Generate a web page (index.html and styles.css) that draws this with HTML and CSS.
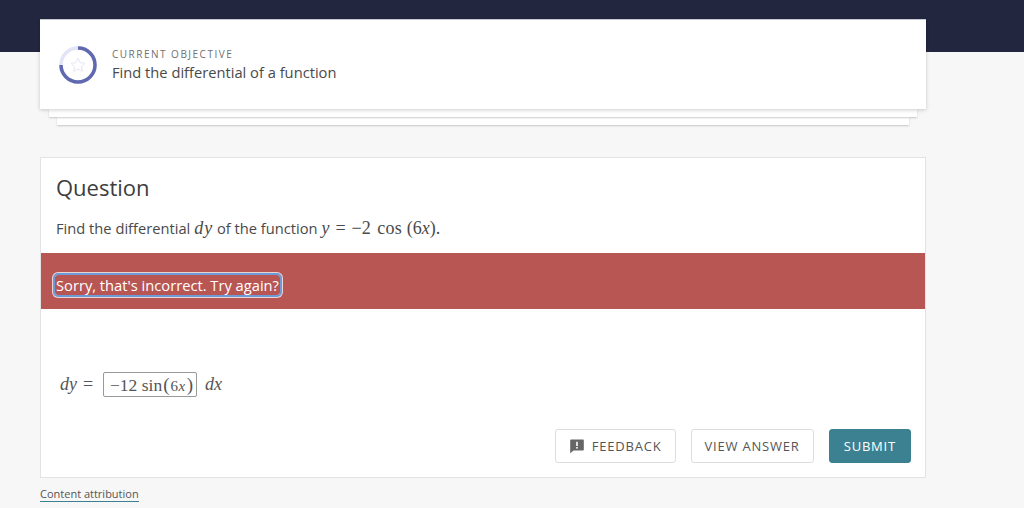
FILE: index.html
```html
<!DOCTYPE html>
<html lang="en">
<head>
    <meta charset="UTF-8">
    <meta name="viewport" content="width=device-width, initial-scale=1.0">
    <title>Find the differential of a function</title>
    <link rel="stylesheet" href="styles.css">
</head>
<body>
    <main class="page">
        <section class="objective">
            <svg class="ring" width="38" height="38" viewBox="0 0 38 38">
                <circle cx="19" cy="19" r="17" fill="none" stroke="#e3e4f5" stroke-width="3.5"/>
                <path d="M19 2A17 17 0 1 1 2 19" fill="none" stroke="#6068b0" stroke-width="3.5"/>
                <path d="M19 12.2l2.1 4.5 4.9.6-3.6 3.300 1 4.800-4.400-2.400-4.400 2.400 1-4.800-3.600-3.300 4.900-.6z" fill="none" stroke="#e6e7f6" stroke-width="1" stroke-linejoin="round"/>
            </svg>
            <div class="objective-text">
                <div class="label">CURRENT OBJECTIVE</div>
                <div class="objective-name">Find the differential of a function</div>
            </div>
        </section>
        <div class="layer layer-one"></div>
        <div class="layer layer-two"></div>

        <section class="question">
            <h2>Question</h2>
            <p class="prompt">Find the differential <span class="math dy-inline"><i>dy</i></span> of the function <span class="math"><i>y</i><span class="rel">=</span>&minus;2 <span class="cos">cos</span> (6<i>x</i>).</span></p>
            <div class="alert"><span class="alert-text">Sorry, that's incorrect. Try again?</span></div>
            <div class="answer math">
                <span class="dy"><i>dy</i><span class="rel">=</span></span>
                <span class="answer-box">&minus;12 sin<span class="paren">(</span><span class="small">6<i>x</i></span><span class="paren">)</span></span>
                <span class="dx"><i>dx</i></span>
            </div>
            <div class="actions">
                <button class="btn">
                    <svg width="16" height="16" viewBox="0 0 16 16"><path d="M2 1.500h12a.8.8 0 0 1 .8.8v9.400a.8.8 0 0 1-.8.8H4.600L1.200 15.200V2.300a.8.8 0 0 1 .8-.8z" fill="#666"/><rect x="7.200" y="3.800" width="1.600" height="4.200" fill="#fff"/><rect x="7.200" y="9" width="1.600" height="1.600" fill="#fff"/></svg>
                    FEEDBACK
                </button>
                <button class="btn">VIEW ANSWER</button>
                <button class="btn btn-submit">SUBMIT</button>
            </div>
        </section>
        <a class="attribution">Content attribution</a>
    </main>
</body>
</html>
```

FILE: styles.css
```css
body{
    margin: 0;
    height: 508px;
    overflow: hidden;
    background: linear-gradient(#22263f 52px, #f7f7f7 52px);
    font-family: "Open Sans", sans-serif;
    color: #444;
}
.page{
    width: 886px;
    margin-left: 40px;
    padding-top: 19px;
}
.objective{
    height: 90px;
    box-sizing: border-box;
    padding: 0 19px;
    display: flex;
    align-items: center;
    gap: 15px;
    background-color: white;
    border-top: 1px solid #c9cad1;
    box-shadow: 0 1px 4px rgba(0, 0, 0, 0.2);
    position: relative;
    z-index: 3;
}
.ring{
    flex: none;
}
.label{
    font-size: 10px;
    line-height: 14px;
    letter-spacing: 1.5px;
    color: #707070;
}
.objective-name{
    font-size: 14.7px;
    line-height: 22px;
    color: #4a4a4a;
}
.layer{
    height: 8px;
    background-color: white;
    box-shadow: 0 1px 2px rgba(0, 0, 0, 0.2);
    position: relative;
}
.layer-one{
    margin: 0 9px;
    z-index: 2;
}
.layer-two{
    margin: 0 17px;
    z-index: 1;
}
.question{
    margin-top: 32px;
    height: 321px;
    box-sizing: border-box;
    background-color: white;
    border: 1px solid #e3e3e3;
}
h2{
    margin: 0;
    padding: 14px 15px 0;
    font-size: 22px;
    line-height: 30px;
    font-weight: 400;
    color: #3d3d3d;
}
.prompt{
    margin: 14px 0 0;
    padding: 0 15px;
    font-size: 14.7px;
    line-height: 24px;
    height: 37px;
    color: #4a4a4a;
}
.math{
    font-family: "Liberation Serif", serif;
    font-size: 18px;
}
.dy-inline{
    letter-spacing: 1px;
}
.rel{
    margin: 0 6px;
}
.cos{
    margin-left: 2px;
    letter-spacing: 0.3px;
}
.alert{
    height: 56px;
    box-sizing: border-box;
    padding: 8px 14px 0;
    display: flex;
    align-items: center;
    background-color: #b85654;
}
.alert-text{
    font-size: 14.7px;
    line-height: 20px;
    font-weight: 500;
    color: white;
    padding: 0 1px;
    border-radius: 3px;
    outline: 2px solid #6d9bd8;
    box-shadow: 0 0 0 3px rgba(255, 255, 255, 0.75);
}
.answer{
    margin-top: 63px;
    padding-left: 19px;
    height: 24px;
    display: flex;
    align-items: center;
    color: #555;
}
.dy{
    width: 43px;
    flex: none;
    white-space: nowrap;
}
.answer-box{
    height: 25px;
    box-sizing: border-box;
    width: 94px;
    padding-left: 6px;
    line-height: 23px;
    font-size: 17.5px;
    border: 1px solid #999;
    border-radius: 2px;
    white-space: nowrap;
}
.paren{
    font-size: 19px;
    margin: 0 1px;
}
.small{
    font-size: 15px;
    letter-spacing: 0.5px;
}
.dx{
    margin-left: 8px;
}
.actions{
    margin-top: 33px;
    padding-right: 14px;
    display: flex;
    justify-content: flex-end;
    gap: 15px;
}
.btn{
    height: 34px;
    padding: 0 13px;
    display: flex;
    align-items: center;
    gap: 7px;
    background-color: white;
    border: 1px solid #ddd;
    border-radius: 3px;
    font-family: "Open Sans", sans-serif;
    font-size: 13px;
    font-weight: 500;
    letter-spacing: 0.8px;
    color: #555;
}
.btn-submit{
    padding: 0 14px;
    background-color: #3b8191;
    border-color: #3b8191;
    color: white;
}
.attribution{
    display: inline-block;
    margin-top: 8px;
    font-size: 11px;
    line-height: 15px;
    font-weight: 500;
    color: #555;
    border-bottom: 1px solid #3b8191;
}
```
